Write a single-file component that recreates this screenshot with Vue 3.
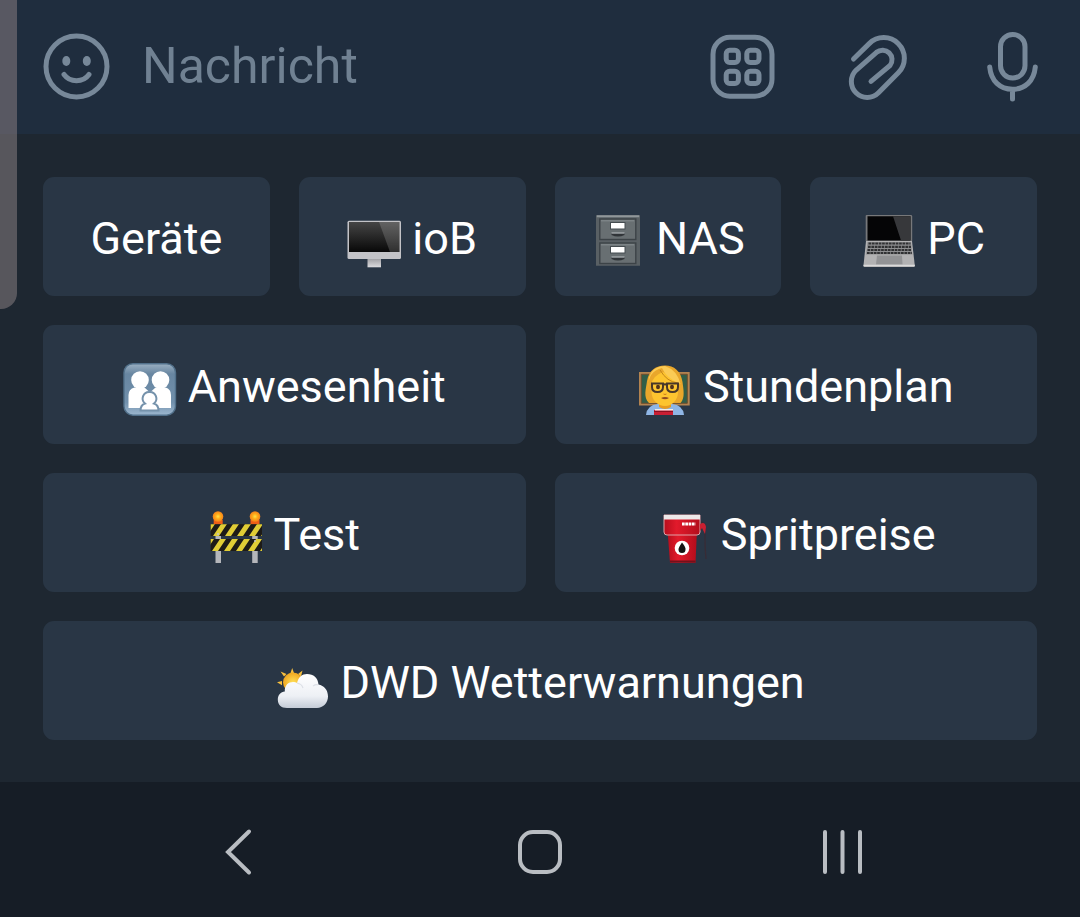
<template>
  <div class="screen">
    <form class="message-bar" @submit.prevent="sendMessage">
      <button type="button" class="icon-button" aria-label="Emoji">
        <svg viewBox="0 0 66 66">
          <circle cx="33.5" cy="32.5" r="30.5" />
          <ellipse class="solid" cx="23.3" cy="27" rx="4" ry="5" />
          <ellipse class="solid" cx="43.8" cy="27" rx="4" ry="5" />
          <path d="M21 40.500C27 48.800 40 48.800 46 40.500" />
        </svg>
      </button>
      <input v-model="message" class="message-input" type="text" placeholder="Nachricht" aria-label="Nachricht">
      <div class="actions">
        <button type="button" class="icon-button" aria-label="Bot-Tastatur">
          <svg viewBox="0 0 66 66">
            <rect x="4" y="3.2" width="59" height="59" rx="17" />
            <rect x="17.2" y="16.2" width="12.2" height="12.2" rx="3.5" />
            <rect x="37.8" y="16.2" width="12.2" height="12.2" rx="3.5" />
            <rect x="17.2" y="37.2" width="12.2" height="12.2" rx="3.5" />
            <rect x="37.8" y="37.2" width="12.2" height="12.2" rx="3.5" />
          </svg>
        </button>
        <button type="button" class="icon-button" aria-label="Anhang">
          <svg viewBox="0 0 66 66">
            <path d="M9.5 25L25.2 9.600A20.600 20.600 0 0 1 54.300 38.800L34.500 58.800A15.900 15.900 0 0 1 12 36.300L32.500 18.300A9.500 9.500 0 0 1 46 31.500L27 47.300" />
          </svg>
        </button>
        <button type="button" class="icon-button" aria-label="Sprachnachricht">
          <svg viewBox="0 0 66 66">
            <rect x="21.5" y="0.5" width="24.5" height="43.5" rx="12.2" />
            <path d="M10.700 33C12 47 21 55.300 33.500 55.300S55 47 56.300 33M33.500 55.300V65" />
          </svg>
        </button>
      </div>
    </form>

    <main class="keyboard">
      <div v-for="(row, i) in rows" :key="i" class="key-row">
        <button v-for="key in row" :key="key.text" type="button" class="key" @click="message = key.text">
          <svg v-if="key.icon" class="emoji" viewBox="0 0 54 54" aria-hidden="true">
            <g v-if="key.icon === 'monitor'">
              <defs>
                <linearGradient id="monitor-screen" x2="0" y2="1"><stop stop-color="#454545" /><stop offset="1" stop-color="#080808" /></linearGradient>
                <linearGradient id="monitor-stand" x2="0" y2="1"><stop stop-color="#9b9b9f" /><stop offset="1" stop-color="#dcdcdf" /></linearGradient>
              </defs>
              <path d="M20.500 44H34v9.300H20.500z" fill="url(#monitor-stand)" />
              <rect x="0.500" y="6.700" width="53.500" height="38.200" rx="1.500" fill="#c3c3c7" />
              <path d="M2 8h50.500v30H2z" fill="url(#monitor-screen)" />
              <path d="M32 8h20.500v30H43z" fill="#fff" opacity=".16" />
            </g>
            <g v-else-if="key.icon === 'cabinet'">
              <path d="M5 1.300H49v50.400H5z" fill="#596064" />
              <path d="M5.800 2.300h42.400" stroke="#90979a" stroke-width="2" />
              <g v-for="y in [5, 29]" :key="y">
                <rect x="8.800" :y="y" width="36" height="20.500" fill="#686f72" stroke="#3c4347" stroke-width="1.400" />
                <path :d="`M10 ${y + 1.8}h33`" stroke="#858c8f" />
                <rect x="19" :y="y + 3" width="15.500" height="7.500" fill="#454c50" />
                <rect x="20" :y="y + 4" width="13.500" height="5.500" fill="#fff" />
                <path :d="`M20.500 ${y + 14}h13v2q-6.500 3-13 0z`" fill="#303438" />
                <path :d="`M20.500 ${y + 14}h13`" stroke="#a4aaad" stroke-width="1.400" />
              </g>
            </g>
            <g v-else-if="key.icon === 'laptop'">
              <path d="M4.500 1h44.500q1 0 1.200 1v25h-46.500V2q0-1 .8-1z" fill="#77787a" />
              <path d="M5.500 2.300h43V26.500h-43z" fill="#050506" />
              <path d="M31 2.300h17.500V26.500H39z" fill="#37383b" />
              <path d="M4 27h46l2.800 24.500q0 1.500-1 1.500H2.500q-1 0-1-1.500z" fill="#b2b2b3" />
              <path d="M5.500 28h43.500l1.300 12.500H4z" fill="#8d8e90" />
              <path d="M6.500 29.500h42M6 32.800h43M5.500 36h44M5 39h45" stroke="#303133" stroke-width="2.200" stroke-dasharray="2.700 .7" />
              <path d="M15 41.500h25l.5 9H14z" fill="#929395" />
              <path d="M1.500 51.500h51.300" stroke="#dadada" stroke-width="1.400" />
            </g>
            <g v-else-if="key.icon === 'family'">
              <defs>
                <linearGradient id="family-tile" x2="0" y2="1"><stop stop-color="#9bb0c2" /><stop offset=".2" stop-color="#6886a1" /><stop offset=".75" stop-color="#7190ac" /><stop offset="1" stop-color="#9cb7cf" /></linearGradient>
              </defs>
              <rect x="1" y="1.700" width="51.500" height="51.500" rx="9" fill="url(#family-tile)" stroke="#52718b" stroke-width="1.400" />
              <g fill="#fff">
                <circle cx="17" cy="18" r="8.800" />
                <circle cx="37.500" cy="18" r="8.800" />
                <path d="M5.500 46V33q0-6 6-7.500h10l5.500 5 5.500-5h10q5.500 1.500 5.500 7.500v13z" />
              </g>
              <path d="M26.500 30a6.500 6.500 0 0 1 4.500 11.500q4.500 1.500 4.500 7h-18q0-5.500 4.500-7A6.500 6.500 0 0 1 26.500 30z" fill="#fff" stroke="#7592ab" stroke-width="2" />
            </g>
            <g v-else-if="key.icon === 'teacher'">
              <path d="M1 10h50.700v33.500H1z" fill="#b28350" />
              <path d="M3.300 12.300h46v29h-46z" fill="#315e48" stroke="#6f4e2c" />
              <path d="M11 41C5 35 8 27 9 19 11 8 18 3.500 27 3.500S43 9 44.500 20c.8 7 3 16-2 21z" fill="#e9a72b" />
              <path d="M8 53q1-10 12-11h14q11 1 12 11z" fill="#8fb6e5" />
              <path d="M21 39h12v6q-6 4-12 0z" fill="#e79b20" />
              <path d="M13.500 23Q14 14 25 10q11 5 15 12v8c0 8-6 14-13 14s-13.500-6-13.500-14z" fill="#fdc42f" />
              <path d="M10 26Q10 9 24 6 28 16 42.500 22 39 8 27 4 15 4 11 15z" fill="#fbcb55" />
              <path d="M22 8q7 12 18 13" fill="none" stroke="#c48619" />
              <ellipse cx="20" cy="25" rx="2" ry="2.300" fill="#51321c" />
              <ellipse cx="34" cy="25" rx="2" ry="2.300" fill="#51321c" />
              <path d="M14 21.500h11v3.500q0 5-5.500 5T14 25zM29 21.500h11v3.500q0 5-5.500 5T29 25zM25 23q2-1.500 4 0" fill="none" stroke="#493729" stroke-width="2" />
              <path d="M25.500 32q1.500 1 3 0" fill="none" stroke="#ca791c" />
              <path d="M23 36q4-2 8 0-4 2.500-8 0z" fill="#8f4a22" />
              <path d="M16 48h19v5H16z" fill="#c91f34" />
              <path d="M17 47h18v1.500H17z" fill="#eee" />
              <path d="M16 49.500h19" stroke="#8c1022" />
            </g>
            <g v-else-if="key.icon === 'barrier'">
              <defs>
                <radialGradient id="barrier-lamp"><stop stop-color="#ffe34b" /><stop offset=".45" stop-color="#ffae19" /><stop offset="1" stop-color="#f4811a" /></radialGradient>
                <clipPath id="barrier-boards"><path d="M1.700 14.300H53V26H1.700zM1.700 29H53v12H1.700z" /></clipPath>
              </defs>
              <path d="M6.500 26H12v27H6.500zM43.200 26h5.500v27h-5.500z" fill="#b4b6ba" />
              <path d="M4.700 10h9v4.500h-9zM41.500 10h9v4.500h-9z" fill="#ee5e16" />
              <circle cx="9" cy="6.500" r="5.300" fill="url(#barrier-lamp)" />
              <circle cx="46" cy="6.500" r="5.300" fill="url(#barrier-lamp)" />
              <g clip-path="url(#barrier-boards)">
                <path d="M1 14h53v28H1z" fill="#1d1b18" />
                <path v-for="x in [-8, 4, 16, 28, 40, 52]" :key="x" :d="`M${x} 26l8-12h6l-8 12zM${x - 1} 41l8-12h6l-8 12z`" fill="#e0cd36" />
              </g>
              <circle cx="9" cy="24" r="1" fill="#c4c4c4" />
              <circle cx="46" cy="31" r="1" fill="#c4c4c4" />
            </g>
            <g v-else-if="key.icon === 'fuel'">
              <defs>
                <linearGradient id="fuel-body"><stop stop-color="#b70e1d" /><stop offset=".35" stop-color="#e21a2b" /><stop offset="1" stop-color="#b30d1c" /></linearGradient>
              </defs>
              <path d="M43 12q6 0 6 5v12q0 10 1 20" fill="none" stroke="#382c36" stroke-width="1.300" />
              <path d="M11.800 24h29L39.500 52.700H14z" fill="url(#fuel-body)" />
              <path d="M8 5h36v17q0 3-3 3H11q-3 0-3-3z" fill="url(#fuel-body)" stroke="#dfa2a7" />
              <path d="M8 5h36v4.500H8z" fill="#eee9e9" />
              <path d="M26 14h13.500" stroke="#fff" stroke-width="3" stroke-dasharray="2.700 .6" />
              <path d="M44 14q5-3 6 3l-1 7-3-6-2 3z" fill="#c92031" />
              <circle cx="26" cy="38" r="7.300" fill="#fff" />
              <path d="M26 32.500q4 5 3.500 7a3.500 3.500 0 0 1-7 0q0-2 3.500-7z" fill="#151515" />
              <path d="M14 51.500h25.500" stroke="#74101a" stroke-width="2" />
            </g>
            <g v-else>
              <defs>
                <radialGradient id="weather-sun"><stop stop-color="#ffe15a" /><stop offset="1" stop-color="#efa61f" /></radialGradient>
                <linearGradient id="weather-cloud" x2="0" y2="1"><stop stop-color="#fff" /><stop offset=".65" stop-color="#edf0f5" /><stop offset="1" stop-color="#c5ccd7" /></linearGradient>
              </defs>
              <path d="M15.500 15l1.700-5 1.800 5zM23 16l4.500-3.500-1.500 6zM9 18.500L5.500 13.500l6 2.500zM7 23l-5 1.200 5 3z" fill="#f7bf3e" />
              <circle cx="18" cy="24.500" r="10" fill="url(#weather-sun)" />
              <path d="M12 50C6 50 2.800 46.500 2.800 41.500c0-4.500 3-7.500 7-8C9.500 27 13.500 24 18 24c1.500 0 3 .3 4 1C23.500 19 27 16 32 16c6.500 0 11 4 11.500 10.500C49 27.500 53 32 53 38.500 53 45 48 50 42 50z" fill="url(#weather-cloud)" />
              <path d="M22 25q5 1 6 5M43 27q-2-1-5 1" fill="none" stroke="#dce0e7" stroke-width="1.200" />
            </g>
          </svg>
          <span>{{ key.text }}</span>
        </button>
      </div>
    </main>

    <nav class="system-nav">
      <button type="button" aria-label="Zurück">
        <svg viewBox="0 0 48 48"><path d="M35 3.500L14 24l21 20.500" stroke-linecap="round" /></svg>
      </button>
      <button type="button" aria-label="Startbildschirm">
        <svg viewBox="0 0 48 48"><rect x="4" y="4" width="40" height="40" rx="13" /></svg>
      </button>
      <button type="button" aria-label="Letzte Apps">
        <svg viewBox="0 0 48 48"><path d="M7 4v40M24.500 4v40M42 4v40" stroke-linecap="round" /></svg>
      </button>
    </nav>

    <div class="edge-panel"></div>
  </div>
</template>

<script setup>
import { ref } from 'vue';

const message = ref('');

const rows = [
  [
    { text: 'Geräte' },
    { text: 'ioB', icon: 'monitor' },
    { text: 'NAS', icon: 'cabinet' },
    { text: 'PC', icon: 'laptop' }
  ],
  [
    { text: 'Anwesenheit', icon: 'family' },
    { text: 'Stundenplan', icon: 'teacher' }
  ],
  [
    { text: 'Test', icon: 'barrier' },
    { text: 'Spritpreise', icon: 'fuel' }
  ],
  [
    { text: 'DWD Wetterwarnungen', icon: 'weather' }
  ]
];

function sendMessage() {
  message.value = '';
}
</script>

<style>
body {
  margin: 0;
  background: #161d26;
}
</style>

<style scoped>
.screen {
  position: relative;
  display: flex;
  flex-direction: column;
  min-height: 100vh;
  background: #1e2731;
  font-family: Roboto, "Noto Sans", sans-serif;
}

button,
input {
  border: 0;
  padding: 0;
  font-family: inherit;
}

button {
  cursor: pointer;
}

.message-bar {
  display: flex;
  align-items: center;
  gap: 33px;
  padding: 34px 35px 34px 43px;
  background: #1f2d3e;
}

.icon-button {
  flex: none;
  width: 66px;
  height: 66px;
  background: none;
}

.icon-button svg {
  display: block;
  overflow: visible;
  fill: none;
  stroke: #778899;
  stroke-width: 5;
  stroke-linecap: round;
}

.icon-button .solid {
  fill: #778899;
  stroke: none;
}

.message-input {
  flex: 1;
  min-width: 0;
  height: 66px;
  padding-bottom: 2px;
  box-sizing: border-box;
  background: none;
  color: #fff;
  font-size: 50px;
  outline: none;
}

.message-input::placeholder {
  color: #708192;
  opacity: 1;
}

.actions {
  display: flex;
  gap: 69px;
}

.keyboard {
  display: flex;
  flex-direction: column;
  gap: 29px;
  padding: 43px 43px 42px;
}

.key-row {
  display: flex;
  gap: 29px;
}

.key {
  display: flex;
  flex: 1 1 0;
  align-items: center;
  justify-content: center;
  gap: 11px;
  min-width: 0;
  height: 119px;
  border-radius: 11px;
  background: #293645;
  color: #fff;
  font-size: 45px;
  line-height: 54px;
  padding-top: 4px;
}

.emoji {
  flex: none;
  width: 54px;
  height: 54px;
  margin-top: 4px;
}

.system-nav {
  display: flex;
  flex: 1;
  align-items: center;
  padding: 46px 8% 41px;
  background: #161d26;
}

.system-nav button {
  display: flex;
  flex: 1;
  justify-content: center;
  background: none;
}

.system-nav svg {
  width: 48px;
  height: 48px;
  fill: none;
  stroke: #b9bdc2;
  stroke-width: 4;
}

.edge-panel {
  position: absolute;
  top: 0;
  left: 0;
  width: 17px;
  height: 309px;
  border-radius: 0 0 16px 0;
  background: rgba(130, 120, 124, 0.58);
}
</style>
